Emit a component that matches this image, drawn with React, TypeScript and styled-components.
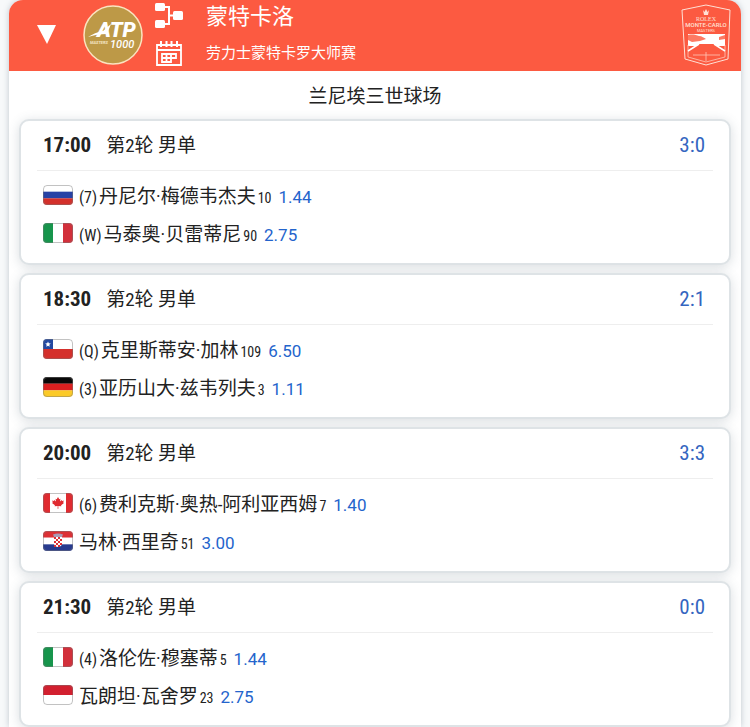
import React from "react";
import styled, { createGlobalStyle } from "styled-components";

const narrow = `"Roboto Condensed", "Liberation Sans Narrow", Roboto, "Noto Sans CJK SC", sans-serif`;

const GlobalStyle = createGlobalStyle`
  * { box-sizing: border-box; }
  body { margin: 0; background: #f7f9fa; color: #222; font-family: Roboto, "Noto Sans CJK SC", sans-serif; }
`;

const Page = styled.main`
  padding: 0 9px;
  overflow: hidden;
`;
const Tournament = styled.section`
  background: #fff;
  border-radius: 14px 14px 0 0;
  box-shadow: 0 0 6px rgba(90, 110, 130, 0.35);
`;
const Header = styled.header`
  display: flex;
  align-items: center;
  height: 71px;
  padding: 0 10px 2px 28px;
  border-radius: 14px 14px 0 0;
  background: #fc5a41;
  color: #fff;
`;
const IconButton = styled.button`
  display: flex;
  padding: 0;
  border: 0;
  background: none;
  color: inherit;
  cursor: pointer;
`;
const Tools = styled.div`
  display: flex;
  flex-direction: column;
  align-items: center;
  gap: 12px;
  margin: 0 23px 0 12px;
`;
const BadgeWrap = styled.div`
  display: flex;
  margin-left: 26px;
`;
const Titles = styled.div`
  flex: 1;
  align-self: flex-start;
  padding-top: 1px;
`;
const City = styled.h1`
  margin: 0;
  font-size: 22px;
  line-height: 32px;
  font-weight: 400;
`;
const EventName = styled.p`
  margin: 0;
  padding-top: 8px;
  font-size: 15px;
  line-height: 24px;
`;
const Court = styled.h2`
  margin: 0;
  padding-top: 4px;
  font-size: 19px;
  line-height: 44px;
  font-weight: 400;
  text-align: center;
`;
const Matches = styled.div`
  display: flex;
  flex-direction: column;
  gap: 8px;
  padding: 0 10px;
`;
const Card = styled.article`
  padding: 0 16px 9px;
  border: 2px solid #dee3e6;
  border-radius: 10px;
  background: #fff;
  box-shadow: 0 2px 12px rgba(70, 90, 105, 0.2);
`;
const CardHead = styled.div`
  display: flex;
  align-items: baseline;
  height: 50px;
  padding: 0 8px 0 6px;
  border-bottom: 1px solid #eee;
  font-family: ${narrow};
  line-height: 48px;
`;
const Time = styled.time`
  margin-right: 15px;
  font-size: 21px;
  font-weight: 700;
`;
const Round = styled.span`
  font-size: 19px;
`;
const Score = styled.a`
  margin-left: auto;
  font-size: 21px;
  color: #3465c0;
  text-decoration: none;
`;
const Players = styled.div`
  padding: 7px 6px 0;
`;
const Player = styled.div`
  display: flex;
  align-items: baseline;
  height: 38px;
  font-family: ${narrow};
  line-height: 38px;
`;
const Seed = styled.span`
  margin-right: 2px;
  font-size: 16px;
`;
const Name = styled.span`
  font-size: 19px;
`;
const Rank = styled.span`
  margin-left: 2px;
  font-size: 14px;
`;
const Odds = styled.a`
  margin-left: 7px;
  font-family: Roboto, sans-serif;
  font-size: 17px;
  color: #2464cc;
  text-decoration: none;
`;
const FlagSvg = styled.svg`
  display: block;
  align-self: center;
  flex: none;
  width: 30px;
  height: 20px;
  margin: 0 6px 4px 0;
`;

type Country = "ru" | "it" | "cl" | "de" | "ca" | "hr" | "mc";
const names: Record<Country, string> = { ru: "俄罗斯", it: "意大利", cl: "智利", de: "德国", ca: "加拿大", hr: "克罗地亚", mc: "摩纳哥" };

const Horizontal = ({ c }: { c: string[] }) => (
  <>{c.map((f, i) => <rect key={i} y={(i * 20) / c.length} width="30" height={20 / c.length + 0.1} fill={f} />)}</>
);
const art: Record<Country, React.ReactNode> = {
  ru: <Horizontal c={["#fff", "#2742a5", "#d3302b"]} />,
  de: <Horizontal c={["#080808", "#d92020", "#fbca28"]} />,
  mc: <Horizontal c={["#d2202f", "#fff"]} />,
  it: <><rect width="10" height="20" fill="#17954c" /><rect x="10" width="10" height="20" fill="#fff" /><rect x="20" width="10" height="20" fill="#d2303b" /></>,
  cl: <><Horizontal c={["#fff", "#d4302c"]} /><rect width="10" height="10" fill="#2348a1" /><path d="M5 2.5l.8 1.8 2 .2-1.5 1.3.4 2L5 6.8l-1.7 1 .4-2-1.5-1.3 2-.2z" fill="#fff" /></>,
  ca: <><rect width="30" height="20" fill="#e02b30" /><rect x="7" width="16" height="20" fill="#fff" /><path d="M15 4l1.300 2.200 1.100-.5-.4 2.700 1.700-1.500.4 1 1.700-.3-.6 1.800.8.500-2.900 2.400.2 1-3-.4.1 2.900h-.8l.1-2.900-3 .4.2-1-2.900-2.400.8-.5-.6-1.800 1.700.3.4-1 1.700 1.500-.4-2.700 1.100.5z" fill="#e02b30" /></>,
  hr: <><Horizontal c={["#dc3035", "#fff", "#283b8e"]} /><path d="M11 6h8v6.500c0 2-2 3.500-4 3.500s-4-1.500-4-3.500z" fill="#fff" />{[0, 1, 2, 3, 4].map(r => [0, 1, 2, 3].map(c => (r + c) % 2 === 0 && <rect key={`${r}-${c}`} x={11 + c * 2} y={6 + r * 2} width="2" height="2" fill="#dc3035" />))}<path d="M11 6l-1-2.500 2.500-.8L15 2.500l2.500.2 2.500.8-1 2.500z" fill="#a99bb5" /></>,
};
function Flag({ country }: { country: Country }) {
  const id = React.useId();
  return (
    <FlagSvg viewBox="0 0 30 20" role="img" aria-label={names[country]}>
      <clipPath id={id}><rect width="30" height="20" rx="4" /></clipPath>
      <g clipPath={`url(#${id})`}>{art[country]}</g>
      <rect x=".5" y=".5" width="29" height="19" rx="3.5" fill="none" stroke="#777" strokeOpacity=".45" />
    </FlagSvg>
  );
}

type Entry = { country: Country; seed?: string; name: string; rank: number; odds: string };
const matches: { time: string; score: string; players: Entry[] }[] = [
  { time: "17:00", score: "3:0", players: [
    { country: "ru", seed: "(7)", name: "丹尼尔·梅德韦杰夫", rank: 10, odds: "1.44" },
    { country: "it", seed: "(W)", name: "马泰奥·贝雷蒂尼", rank: 90, odds: "2.75" } ] },
  { time: "18:30", score: "2:1", players: [
    { country: "cl", seed: "(Q)", name: "克里斯蒂安·加林", rank: 109, odds: "6.50" },
    { country: "de", seed: "(3)", name: "亚历山大·兹韦列夫", rank: 3, odds: "1.11" } ] },
  { time: "20:00", score: "3:3", players: [
    { country: "ca", seed: "(6)", name: "费利克斯·奥热-阿利亚西姆", rank: 7, odds: "1.40" },
    { country: "hr", name: "马林·西里奇", rank: 51, odds: "3.00" } ] },
  { time: "21:30", score: "0:0", players: [
    { country: "it", seed: "(4)", name: "洛伦佐·穆塞蒂", rank: 5, odds: "1.44" },
    { country: "mc", name: "瓦朗坦·瓦舍罗", rank: 23, odds: "2.75" } ] },
];

const AtpBadge = () => (
  <svg width="60" height="60" viewBox="0 0 60 60" role="img" aria-label="ATP Masters 1000">
    <circle cx="30" cy="30" r="29" fill="#bd9947" stroke="#fbe3c0" strokeWidth="1.5" />
    <path d="M5 32c5-3 9-5 15-6l8-7-4 10c-7 0-13 1-19 3z" fill="#fff" />
    <text fontFamily="Roboto" fontStyle="italic" fill="#fff">
      <tspan x="14" y="32" fontWeight="900" fontSize="21">ATP</tspan>
      <tspan x="7" y="39" fontWeight="700" fontSize="4" fill="#f5e6c8">MASTERS</tspan>
      <tspan x="27" y="43" fontWeight="500" fontSize="11">1000</tspan>
    </text>
  </svg>
);
const DrawIcon = () => (
  <svg width="28" height="26" viewBox="0 0 28 26" fill="currentColor" aria-hidden="true">
    <rect width="10" height="8" rx="1.5" /><rect y="17" width="10" height="8" rx="1.5" /><rect x="18" y="8" width="10" height="9" rx="1.5" />
    <path d="M9 4h5v17H9M14 12.500h5" fill="none" stroke="currentColor" strokeWidth="2" />
  </svg>
);
const CalendarIcon = () => (
  <svg width="26" height="26" viewBox="0 0 26 26" fill="none" stroke="currentColor" aria-hidden="true">
    <path d="M1 4h24v20H1zM1 9h24" strokeWidth="1.8" /><path d="M5 0v6M10.500 0v6M15.500 0v6M21 0v6" strokeWidth="2" />
    <path d="M6 13h14v4h-5v4H6zM6 17h9M10.500 13v8M15 13v4" strokeWidth="1.8" />
  </svg>
);
const MonteCarloLogo = () => (
  <svg width="50" height="62" viewBox="0 0 50 62" role="img" aria-label="Rolex Monte-Carlo Masters" fill="#fff">
    <path d="M25 1L49 6l-2 49-22 6-21-6L1 6z" fill="none" stroke="#ffe0d5" />
    <path d="M22 6l1.500 2L25 5l1.500 3L28 6l-1 5h-4z" fill="#ffe0d5" />
    <text fill="#ffe0d5" textAnchor="middle">
      <tspan x="25" y="17" fontFamily="Liberation Serif" fontSize="6">ROLEX</tspan>
      <tspan x="25" y="23" fontFamily="Roboto" fontWeight="500" fontSize="6">MONTE-CARLO</tspan>
      <tspan x="25" y="28" fontFamily="Roboto" fontSize="4">MASTERS</tspan>
    </text>
    <path d="M7 30h37v12H7z" />
    <path d="M7 31c5-1 8 0 11 1 3 0 5 2 7 3l-6 2-8 1-4-2zM38 33l6-2v4l-6 1z" fill="#fd7a63" />
    <path d="M18 40h15l11 7v6l-19 6-18-6v-6z" fill="#fc5a41" />
    <path d="M7 41v12l18 5 19-5V41M25 48v9M12 51h27" stroke="#ffc7b8" strokeWidth=".8" fill="none" />
    <path d="M18 40L7 47M33 40l11 7" stroke="#fff" strokeWidth="1.5" fill="none" />
  </svg>
);

export default function App() {
  return (
    <Page>
      <GlobalStyle />
      <Tournament>
        <Header>
          <IconButton aria-label="收起">
            <svg width="20" height="22" viewBox="0 0 20 22" aria-hidden="true"><path d="M0 1h19l-9 19z" fill="currentColor" /></svg>
          </IconButton>
          <BadgeWrap><AtpBadge /></BadgeWrap>
          <Tools>
            <IconButton aria-label="签表"><DrawIcon /></IconButton>
            <IconButton aria-label="赛程"><CalendarIcon /></IconButton>
          </Tools>
          <Titles>
            <City>蒙特卡洛</City>
            <EventName>劳力士蒙特卡罗大师赛</EventName>
          </Titles>
          <MonteCarloLogo />
        </Header>
        <Court>兰尼埃三世球场</Court>
        <Matches>
          {matches.map(m => (
            <Card key={m.time}>
              <CardHead>
                <Time>{m.time}</Time>
                <Round>第2轮 男单</Round>
                <Score href="#score">{m.score}</Score>
              </CardHead>
              <Players>
                {m.players.map(p => (
                  <Player key={p.name}>
                    <Flag country={p.country} />
                    {p.seed && <Seed>{p.seed}</Seed>}
                    <Name>{p.name}</Name>
                    <Rank>{p.rank}</Rank>
                    <Odds href="#odds">{p.odds}</Odds>
                  </Player>
                ))}
              </Players>
            </Card>
          ))}
        </Matches>
      </Tournament>
    </Page>
  );
}
